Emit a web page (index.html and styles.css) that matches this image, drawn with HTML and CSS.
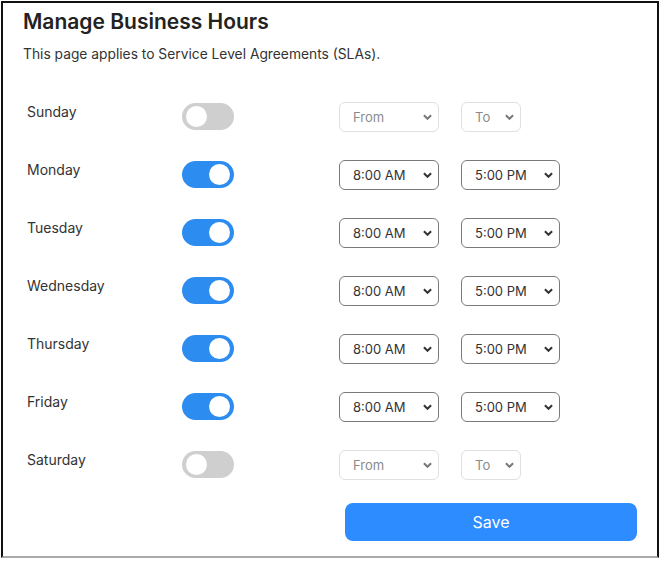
FILE: index.html
```html
<!DOCTYPE html>
<html lang="en">
<head>
  <meta charset="UTF-8" />
  <meta name="viewport" content="width=device-width, initial-scale=1.0"/>
  <title>Manage Business Hours</title>
  <link rel="stylesheet" href="styles.css">
</head>
<body>

  <div class="frame">
    <h1 class="title">Manage Business Hours</h1>
    <p class="subtitle">This page applies to Service Level Agreements (SLAs).</p>

    <div class="days">

      <div class="day">
        <span class="day-name">Sunday</span>
        <span class="toggle"><span class="knob"></span></span>
        <div class="pick from off">
          <select><option>From</option></select>
          <svg class="chev" viewBox="0 0 10 6"><path d="M1 1l4 4 4-4"/></svg>
        </div>
        <div class="pick to off">
          <select><option>To</option></select>
          <svg class="chev" viewBox="0 0 10 6"><path d="M1 1l4 4 4-4"/></svg>
        </div>
      </div>

      <div class="day">
        <span class="day-name">Monday</span>
        <span class="toggle on"><span class="knob"></span></span>
        <div class="pick from">
          <select><option>8:00 AM</option></select>
          <svg class="chev" viewBox="0 0 10 6"><path d="M1 1l4 4 4-4"/></svg>
        </div>
        <div class="pick to">
          <select><option>5:00 PM</option></select>
          <svg class="chev" viewBox="0 0 10 6"><path d="M1 1l4 4 4-4"/></svg>
        </div>
      </div>

      <div class="day">
        <span class="day-name">Tuesday</span>
        <span class="toggle on"><span class="knob"></span></span>
        <div class="pick from">
          <select><option>8:00 AM</option></select>
          <svg class="chev" viewBox="0 0 10 6"><path d="M1 1l4 4 4-4"/></svg>
        </div>
        <div class="pick to">
          <select><option>5:00 PM</option></select>
          <svg class="chev" viewBox="0 0 10 6"><path d="M1 1l4 4 4-4"/></svg>
        </div>
      </div>

      <div class="day">
        <span class="day-name">Wednesday</span>
        <span class="toggle on"><span class="knob"></span></span>
        <div class="pick from">
          <select><option>8:00 AM</option></select>
          <svg class="chev" viewBox="0 0 10 6"><path d="M1 1l4 4 4-4"/></svg>
        </div>
        <div class="pick to">
          <select><option>5:00 PM</option></select>
          <svg class="chev" viewBox="0 0 10 6"><path d="M1 1l4 4 4-4"/></svg>
        </div>
      </div>

      <div class="day">
        <span class="day-name">Thursday</span>
        <span class="toggle on"><span class="knob"></span></span>
        <div class="pick from">
          <select><option>8:00 AM</option></select>
          <svg class="chev" viewBox="0 0 10 6"><path d="M1 1l4 4 4-4"/></svg>
        </div>
        <div class="pick to">
          <select><option>5:00 PM</option></select>
          <svg class="chev" viewBox="0 0 10 6"><path d="M1 1l4 4 4-4"/></svg>
        </div>
      </div>

      <div class="day">
        <span class="day-name">Friday</span>
        <span class="toggle on"><span class="knob"></span></span>
        <div class="pick from">
          <select><option>8:00 AM</option></select>
          <svg class="chev" viewBox="0 0 10 6"><path d="M1 1l4 4 4-4"/></svg>
        </div>
        <div class="pick to">
          <select><option>5:00 PM</option></select>
          <svg class="chev" viewBox="0 0 10 6"><path d="M1 1l4 4 4-4"/></svg>
        </div>
      </div>

      <div class="day">
        <span class="day-name">Saturday</span>
        <span class="toggle"><span class="knob"></span></span>
        <div class="pick from off">
          <select><option>From</option></select>
          <svg class="chev" viewBox="0 0 10 6"><path d="M1 1l4 4 4-4"/></svg>
        </div>
        <div class="pick to off">
          <select><option>To</option></select>
          <svg class="chev" viewBox="0 0 10 6"><path d="M1 1l4 4 4-4"/></svg>
        </div>
      </div>

    </div>

    <div class="actions">
      <button type="button" class="save">Save</button>
    </div>
  </div>

</body>
</html>
```

FILE: styles.css
```css
body {
  margin: 0;
  font-family: Inter, "Noto Sans", sans-serif;
  color: #333;
  background: #fff;
}

.frame {
  width: 658px;
  height: 557px;
  margin: 1px 0 0 1px;
  border: 2px solid #111;
  border-bottom-color: #a9a9a9;
  padding: 7px 20px 0 20px;
  box-sizing: border-box;
}

.title {
  margin: 0;
  font-size: 21px;
  line-height: 24px;
  font-weight: 600;
  color: #222;
}

.subtitle {
  margin: 10px 0 0 0;
  font-size: 13.8px;
  line-height: 20px;
  color: #333;
}

.days {
  margin-top: 38px;
  padding-left: 4px;
}

.day {
  display: grid;
  grid-template-columns: 155px 157px 100px auto;
  align-items: center;
  height: 30px;
  margin-bottom: 28px;
}

.day-name {
  align-self: start;
  font-size: 14px;
  line-height: 20px;
  color: #333;
}

.toggle {
  display: block;
  width: 52px;
  height: 27px;
  border-radius: 14px;
  background: #cfcfcf;
  position: relative;
  margin-top: -2px;
}

.toggle .knob {
  position: absolute;
  top: 3px;
  left: 4px;
  width: 21px;
  height: 21px;
  border-radius: 50%;
  background: #fff;
}

.toggle.on {
  background: #2d8cf0;
}

.toggle.on .knob {
  left: 27px;
}

.pick {
  position: relative;
  width: 100px;
  height: 30px;
}

.pick.to {
  margin-left: 22px;
  width: 99px;
}

.pick.to.off {
  width: 60px;
}

.pick select {
  -webkit-appearance: none;
  appearance: none;
  width: 100%;
  height: 30px;
  padding: 0 0 0 13px;
  border: 1px solid #7a7a7a;
  border-radius: 6px;
  background: #fff;
  font-family: inherit;
  font-size: 13px;
  color: #333;
  box-sizing: border-box;
}

.pick.off select {
  border-color: #e0e0e0;
  color: #8a8a8a;
}

.chev {
  position: absolute;
  right: 7px;
  top: 12px;
  width: 9px;
  height: 6px;
  fill: none;
  stroke: #333;
  stroke-width: 2.2;
  pointer-events: none;
}

.pick.off .chev {
  stroke: #777;
}

.actions {
  display: flex;
  justify-content: flex-end;
  margin-top: -5px;
}

.save {
  width: 292px;
  height: 38px;
  border: none;
  border-radius: 8px;
  background: #2d8cff;
  color: #fff;
  font-family: inherit;
  font-size: 16px;
  cursor: pointer;
}
```
